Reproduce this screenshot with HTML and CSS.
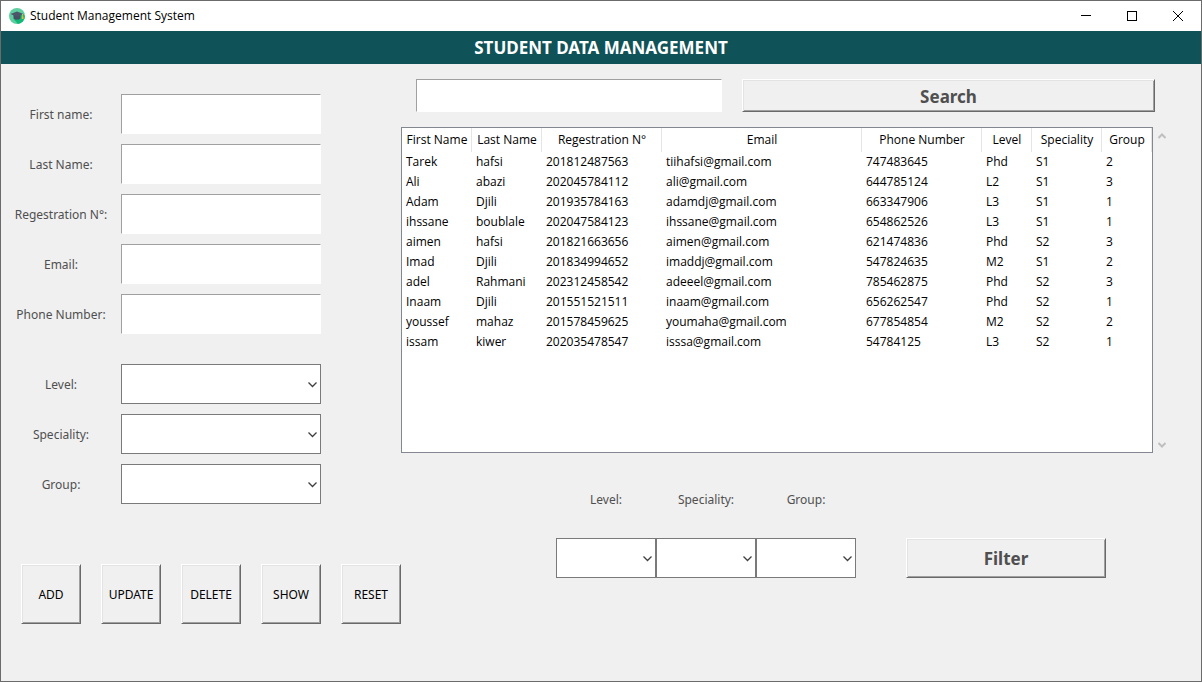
FILE: index.html
```html
<!DOCTYPE html>
<html lang="en">
<head>
<meta charset="utf-8">
<title>Student Management System</title>
<link rel="stylesheet" href="styles.css">
</head>
<body>
<div class="window">
  <header class="titlebar">
    <svg class="app-icon" viewBox="0 0 16 16" aria-hidden="true">
      <circle cx="8" cy="8" r="8" fill="#5fcf9f"/>
      <path d="M4.500 11 9 15.900A8 8 0 0 0 15.900 8L14 6z" fill="#12b877"/>
      <path d="M4.500 7v3.600Q8 13 11.500 10.600V7z" fill="#465064"/>
      <path d="M1.500 6 8 3.500l6.500 2.500L8 9z" fill="#4c566b"/>
      <path d="M13.500 6v3" stroke="#d8b83a" stroke-width="1"/>
      <path d="M12.800 8.500h1.700v2.500h-1.700z" fill="#e5bd2d"/>
    </svg>
    <span class="title">Student Management System</span>
    <div class="controls">
      <button class="control" type="button" aria-label="Minimize"><svg viewBox="0 0 10 10"><path d="M0 4.500h10"/></svg></button>
      <button class="control" type="button" aria-label="Maximize"><svg viewBox="0 0 10 10"><path d="M.5.5h9v9h-9z"/></svg></button>
      <button class="control smooth" type="button" aria-label="Close"><svg viewBox="0 0 10 10"><path d="M0 0l10 10M10 0 0 10"/></svg></button>
    </div>
  </header>
  <h1 class="banner">STUDENT DATA MANAGEMENT</h1>
  <main class="content">
    <form class="entry">
      <div class="fields">
        <label for="first">First name:</label><input class="box" id="first" type="text">
        <label for="last">Last Name:</label><input class="box" id="last" type="text">
        <label for="reg">Regestration N°:</label><input class="box" id="reg" type="text">
        <label for="email">Email:</label><input class="box" id="email" type="text">
        <label for="phone">Phone Number:</label><input class="box" id="phone" type="text">
      </div>
      <div class="fields">
        <label for="level">Level:</label>
        <div class="combo"><select id="level"><option></option><option>L2</option><option>L3</option><option>M2</option><option>Phd</option></select><svg viewBox="0 0 9 5"><path d="M.5.5l4 4 4-4"/></svg></div>
        <label for="spec">Speciality:</label>
        <div class="combo"><select id="spec"><option></option><option>S1</option><option>S2</option></select><svg viewBox="0 0 9 5"><path d="M.5.5l4 4 4-4"/></svg></div>
        <label for="group">Group:</label>
        <div class="combo"><select id="group"><option></option><option>1</option><option>2</option><option>3</option></select><svg viewBox="0 0 9 5"><path d="M.5.5l4 4 4-4"/></svg></div>
      </div>
      <div class="actions">
        <button class="raised" type="button">ADD</button>
        <button class="raised" type="button">UPDATE</button>
        <button class="raised" type="button">DELETE</button>
        <button class="raised" type="button">SHOW</button>
        <button class="raised" type="button">RESET</button>
      </div>
    </form>
    <section class="records">
      <form class="search">
        <input class="box" type="text" aria-label="Search">
        <button class="raised strong" type="button">Search</button>
      </form>
      <div class="list">
        <div class="sheet">
          <table>
            <colgroup><col class="c70"><col class="c70"><col class="c120"><col class="c200"><col class="c120"><col class="c50"><col class="c70"><col class="c50"></colgroup>
            <thead><tr><th>First Name</th><th>Last Name</th><th>Regestration N°</th><th>Email</th><th>Phone Number</th><th>Level</th><th>Speciality</th><th>Group</th></tr></thead>
            <tbody>
              <tr><td>Tarek</td><td>hafsi</td><td>201812487563</td><td>tiihafsi@gmail.com</td><td>747483645</td><td>Phd</td><td>S1</td><td>2</td></tr>
              <tr><td>Ali</td><td>abazi</td><td>202045784112</td><td>ali@gmail.com</td><td>644785124</td><td>L2</td><td>S1</td><td>3</td></tr>
              <tr><td>Adam</td><td>Djili</td><td>201935784163</td><td>adamdj@gmail.com</td><td>663347906</td><td>L3</td><td>S1</td><td>1</td></tr>
              <tr><td>ihssane</td><td>boublale</td><td>202047584123</td><td>ihssane@gmail.com</td><td>654862526</td><td>L3</td><td>S1</td><td>1</td></tr>
              <tr><td>aimen</td><td>hafsi</td><td>201821663656</td><td>aimen@gmail.com</td><td>621474836</td><td>Phd</td><td>S2</td><td>3</td></tr>
              <tr><td>Imad</td><td>Djili</td><td>201834994652</td><td>imaddj@gmail.com</td><td>547824635</td><td>M2</td><td>S1</td><td>2</td></tr>
              <tr><td>adel</td><td>Rahmani</td><td>202312458542</td><td>adeeel@gmail.com</td><td>785462875</td><td>Phd</td><td>S2</td><td>3</td></tr>
              <tr><td>Inaam</td><td>Djili</td><td>201551521511</td><td>inaam@gmail.com</td><td>656262547</td><td>Phd</td><td>S2</td><td>1</td></tr>
              <tr><td>youssef</td><td>mahaz</td><td>201578459625</td><td>youmaha@gmail.com</td><td>677854854</td><td>M2</td><td>S2</td><td>2</td></tr>
              <tr><td>issam</td><td>kiwer</td><td>202035478547</td><td>isssa@gmail.com</td><td>54784125</td><td>L3</td><td>S2</td><td>1</td></tr>
            </tbody>
          </table>
        </div>
        <div class="scroll" aria-hidden="true">
          <svg viewBox="0 0 8 6"><path d="M.5 5 4 1.500 7.500 5"/></svg>
          <svg viewBox="0 0 8 6"><path d="M.5 1 4 4.500 7.500 1"/></svg>
        </div>
      </div>
      <form class="filter">
        <div class="pick"><label for="flevel">Level:</label><div class="combo"><select id="flevel"><option></option><option>L2</option><option>L3</option><option>M2</option><option>Phd</option></select><svg viewBox="0 0 9 5"><path d="M.5.5l4 4 4-4"/></svg></div></div>
        <div class="pick"><label for="fspec">Speciality:</label><div class="combo"><select id="fspec"><option></option><option>S1</option><option>S2</option></select><svg viewBox="0 0 9 5"><path d="M.5.5l4 4 4-4"/></svg></div></div>
        <div class="pick"><label for="fgroup">Group:</label><div class="combo"><select id="fgroup"><option></option><option>1</option><option>2</option><option>3</option></select><svg viewBox="0 0 9 5"><path d="M.5.5l4 4 4-4"/></svg></div></div>
        <button class="raised strong" type="button">Filter</button>
      </form>
    </section>
  </main>
</div>
</body>
</html>
```
FILE: styles.css
```css
* { box-sizing: border-box; }
body {
  margin: 0;
  font: 12px/20px "Noto Sans", "Open Sans", sans-serif;
  color: #000;
}
button, input, select { font: inherit; color: inherit; margin: 0; }
.window {
  display: flex;
  flex-direction: column;
  min-height: 100vh;
  border: 1px solid #6b6b6b;
  background: #f0f0f0;
}
.titlebar {
  display: flex;
  align-items: center;
  height: 30px;
  padding-left: 8px;
  gap: 5px;
  background: #fff;
  font-family: "Open Sans", sans-serif;
}
.app-icon { width: 16px; height: 16px; }
.controls { display: flex; margin-left: auto; }
.control {
  display: grid;
  place-items: center;
  width: 46px;
  height: 30px;
  padding: 0;
  border: 0;
  background: none;
}
.control svg { width: 10px; height: 10px; fill: none; stroke: #000; shape-rendering: crispEdges; }
.control.smooth svg { shape-rendering: auto; overflow: visible; }
.banner {
  margin: 0;
  padding-top: 1px;
  background: #0f5257;
  color: #fff;
  font-size: 17px;
  font-weight: 700;
  line-height: 32px;
  text-align: center;
}
.content { display: flex; flex: 1; }
.entry {
  display: flex;
  flex-direction: column;
  gap: 30px;
  width: 400px;
  padding-top: 30px;
}
.fields {
  display: grid;
  grid-template-columns: 120px 200px;
  grid-auto-rows: 40px;
  row-gap: 10px;
  align-items: center;
}
label { padding-top: 2px; text-align: center; color: #4f4f4f; }
.box {
  width: 100%;
  height: 100%;
  padding: 0 4px;
  border: 1px solid;
  border-color: #a0a0a0 #fff #fff #a0a0a0;
  background: #fff;
}
.combo { position: relative; height: 40px; }
.combo select {
  appearance: none;
  width: 100%;
  height: 100%;
  padding: 0 20px 0 4px;
  border: 1px solid #7a7a7a;
  border-radius: 0;
  background: #fff;
}
.combo svg {
  position: absolute;
  right: 4px;
  top: 18px;
  width: 9px;
  height: 5px;
  fill: none;
  stroke: #404040;
  stroke-width: 1.3;
  overflow: visible;
  pointer-events: none;
}
.raised {
  padding: 2px 0 0;
  border: 1px solid;
  border-color: #fff #696969 #696969 #fff;
  background: #f0f0f0;
  box-shadow: inset 1px 1px #e3e3e3, inset -1px -1px #a0a0a0;
}
.actions { display: flex; gap: 20px; padding: 30px 0 0 20px; }
.actions .raised { width: 60px; height: 60px; }
.strong { color: #4f4f4f; font-size: 17px; font-weight: 700; }
.records { flex: 1; min-width: 0; padding: 15px 31px 0 0; }
.search {
  display: grid;
  grid-template-columns: 306fr 413fr;
  gap: 20px;
  height: 33px;
  margin: 0 15px;
}
.list { display: flex; margin-top: 15px; }
.sheet {
  flex: 1;
  min-height: 326px;
  border: 1px solid #828790;
  background: #fff;
}
table { width: 100%; table-layout: fixed; border-collapse: collapse; font-family: "Open Sans", sans-serif; }
.c50 { width: 50px; }
.c70 { width: 70px; }
.c120 { width: 120px; }
.c200 { width: 200px; }
th, td { padding: 0; white-space: nowrap; }
th { height: 24px; font-weight: 400; box-shadow: inset -1px 0 #e5e5e5; }
td { height: 20px; padding-left: 4px; text-align: left; }
.scroll {
  display: flex;
  flex-direction: column;
  align-items: center;
  justify-content: space-between;
  width: 17px;
  padding: 6px 0 5px;
}
.scroll svg { width: 8px; height: 6px; fill: none; stroke: #bfbfbf; stroke-width: 2; }
.filter { display: flex; align-items: flex-end; margin: 35px 0 0 155px; }
.pick { display: flex; flex-direction: column; gap: 28px; width: 100px; }
.filter .raised { width: 200px; height: 40px; margin-left: 50px; }
```
